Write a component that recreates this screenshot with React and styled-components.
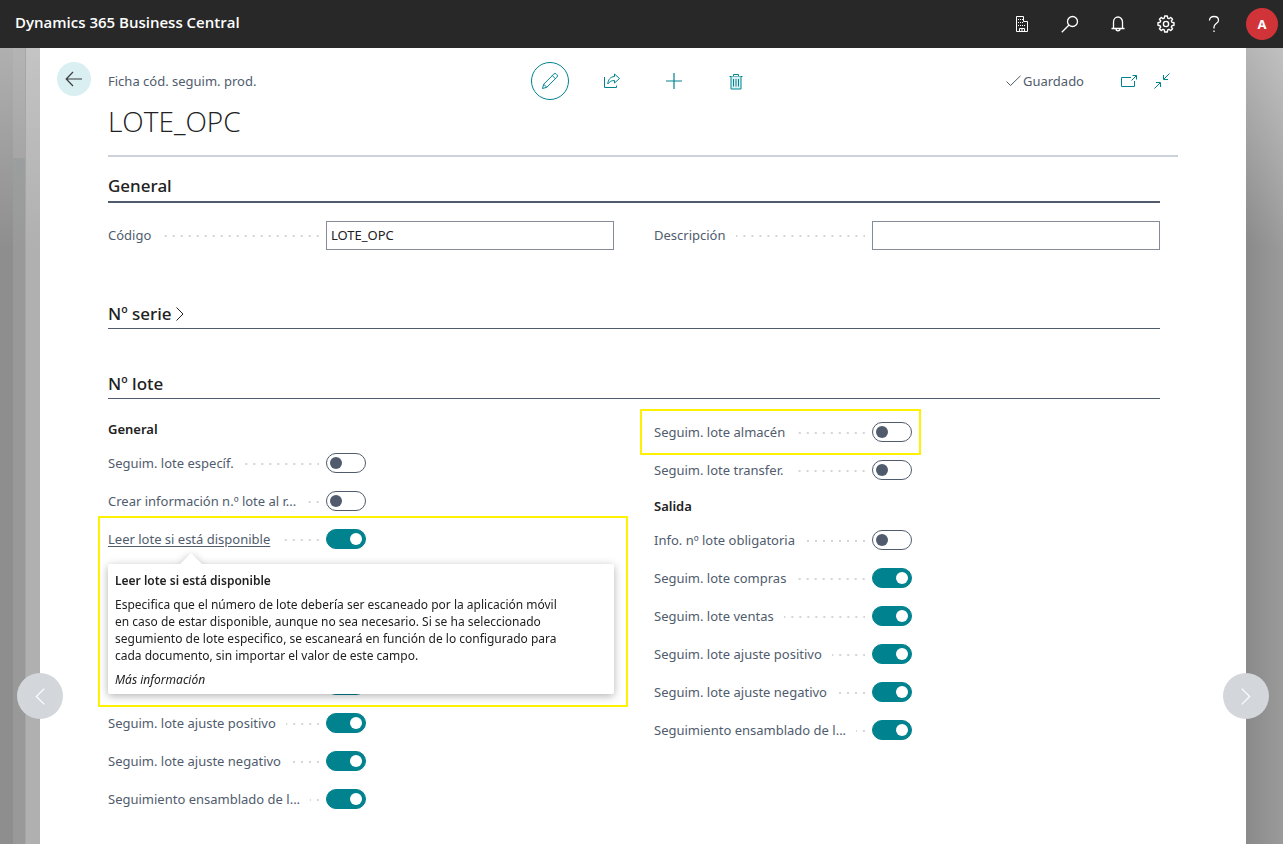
import styled, { createGlobalStyle } from "styled-components";

const GlobalStyle = createGlobalStyle`
  *, *::before, *::after {
    box-sizing: border-box;
  }

  body {
    margin: 0;
    background: #fff;
    color: #212121;
    font-family: "Noto Sans", "Open Sans", sans-serif;
    font-size: 13px;
    line-height: 18px;
  }

  button {
    font: inherit;
    border: 0;
    padding: 0;
    background: none;
    cursor: pointer;
  }

  h1, h2, h3, h4, p {
    margin: 0;
  }

  svg {
    display: block;
    fill: none;
    stroke: currentColor;
  }
`;

const Shell = styled.div`
  display: flex;
  flex-direction: column;
  height: 100vh;
  overflow: hidden;
`;

const TopBar = styled.header`
  display: flex;
  align-items: center;
  justify-content: space-between;
  flex: none;
  height: 48px;
  padding: 0 5px 0 15px;
  background: #282828;
  color: #fff;
`;

const Brand = styled.div`
  font-family: "Open Sans", sans-serif;
  font-size: 15px;
  font-weight: 600;
  padding-bottom: 4px;
`;

const TopActions = styled.nav`
  display: flex;
  align-items: center;
`;

const TopButton = styled.button`
  display: grid;
  place-items: center;
  width: 48px;
  height: 48px;
  color: #fff;
`;

const Avatar = styled.button`
  width: 32px;
  height: 32px;
  margin-left: 8px;
  border-radius: 50%;
  background: #d13438;
  color: #fff;
  font-size: 13px;
  font-weight: 700;
`;

const Stage = styled.div`
  position: relative;
  display: flex;
  flex: 1;
  min-height: 0;
`;

const LeftBackdrop = styled.div`
  display: grid;
  grid-template-columns: 13px 13px 1fr;
  flex: 0 0 40px;
`;

const Strip = styled.div`
  background: linear-gradient(170deg, ${(p) => p.$from}, ${(p) => p.$to} 200px);
`;

const SteppedStrip = styled.div`
  border-right: 1px solid #a6a6a6;
  background: linear-gradient(180deg, #b4b4b4, #a6a6a6 110px, #9c9f9f 110px, #999 200px);
`;

const RightBackdrop = styled.div`
  flex: 0 0 37px;
  background:
    linear-gradient(90deg, transparent, rgba(255, 255, 255, 0.14)),
    linear-gradient(190deg, #b6b6b6, #8a8a8a 200px);
`;

const Page = styled.main`
  flex: 1;
  min-width: 0;
  background: #fff;
`;

const PageHead = styled.div`
  display: flex;
  align-items: flex-start;
  gap: 17px;
  padding: 14px 68px 0 17px;
`;

const BackButton = styled.button`
  display: grid;
  place-items: center;
  flex: none;
  width: 34px;
  height: 34px;
  border-radius: 50%;
  background: #d9eff2;
  color: #3b3b3b;
`;

const HeadContent = styled.div`
  flex: 1;
  border-bottom: 2px solid #cdd2d8;
`;

const CommandBar = styled.div`
  display: grid;
  grid-template-columns: 1fr auto 1fr;
  align-items: center;
`;

const Crumb = styled.span`
  color: #505c6d;
`;

const Commands = styled.div`
  display: flex;
  gap: 24px;
`;

const Command = styled.button`
  display: grid;
  place-items: center;
  width: 38px;
  height: 38px;
  border-radius: 50%;
  border: 1px solid ${(p) => (p.$active ? "#00838f" : "transparent")};
  color: #00838f;
`;

const PageStatus = styled.div`
  display: flex;
  align-items: center;
  justify-content: flex-end;
  padding-right: 6px;
  color: #505c6d;
`;

const Saved = styled.span`
  display: flex;
  align-items: center;
  gap: 2px;
  margin-right: 35px;
`;

const StatusButton = styled.button`
  display: grid;
  place-items: center;
  width: 20px;
  height: 20px;
  color: #00838f;

  & + & {
    margin-left: 13px;
  }
`;

const Title = styled.h1`
  padding: 2px 0 15px;
  font-family: "Open Sans", sans-serif;
  font-size: 28px;
  font-weight: 300;
  line-height: 38px;
`;

const Body = styled.div`
  padding: 0 86px 0 68px;
`;

const SectionHead = styled.h2`
  display: flex;
  align-items: center;
  gap: 4px;
  height: ${(p) => (p.$strong ? 46 : 30)}px;
  padding-top: ${(p) => (p.$strong ? 14 : 0)}px;
  border-bottom: ${(p) => (p.$strong ? 2 : 1)}px solid #505c6d;
  font-size: 17px;
  font-weight: 500;
  line-height: 24px;
`;

const Columns = styled.div`
  display: grid;
  grid-template-columns: 1fr 1fr;
  column-gap: 40px;
`;

const GeneralFields = styled(Columns)`
  padding: 13px 0 45px;
`;

const LotFields = styled(Columns)`
  padding-top: 14px;
`;

const CollapsedSection = styled.section`
  padding-bottom: 40px;
`;

const GroupHead = styled.h3`
  height: 32px;
  padding-top: 8px;
  font-size: 13px;
  font-weight: 600;
  line-height: 18px;

  &:first-child {
    height: 31px;
    padding-top: 7px;
  }
`;

const Row = styled.div`
  position: relative;
  display: grid;
  grid-template-columns: 218fr 288fr;
  align-items: center;
  height: 38px;
`;

const Caption = styled.div`
  display: flex;
  align-items: center;
  min-width: 0;
  padding-right: 7px;
  color: #505c6d;

  label {
    flex: none;
    white-space: nowrap;
    text-decoration: ${(p) => (p.$underlined ? "underline" : "none")};
    text-underline-offset: 2px;
  }

  &::after {
    content: "";
    flex: 1;
    height: 2px;
    margin: 2px 0 0 10px;
    background: linear-gradient(90deg, transparent 6px, #d3d5d8 6px) right top / 8px 2px repeat-x;
  }
`;

const TextInput = styled.input`
  width: 100%;
  height: 29px;
  padding: 0 4px;
  border: 1px solid #848c98;
  border-radius: 0;
  background: #fff;
  color: #212121;
  font: inherit;
`;

const Switch = styled.input`
  appearance: none;
  display: flex;
  align-items: center;
  width: 40px;
  height: 20px;
  margin: 0;
  padding: 0 3px;
  border: 1px solid #505c6d;
  border-radius: 10px;
  background: #fff;
  cursor: pointer;

  &::before {
    content: "";
    width: 12px;
    height: 12px;
    border-radius: 50%;
    background: #505c6d;
  }

  &:checked {
    justify-content: flex-end;
    border-color: #00838f;
    background: #00838f;
  }

  &:checked::before {
    background: #fff;
  }
`;

/* Rows that stay behind the open tooltip */
const CoveredRows = styled.div`
  display: flex;
  flex-direction: column;
  justify-content: flex-end;
  height: 146px;

  ${Switch} {
    grid-column: 2;
  }
`;

const Marker = styled.div`
  position: absolute;
  z-index: 3;
  top: -4px;
  left: ${(p) => p.$left}px;
  width: ${(p) => p.$width}px;
  height: ${(p) => p.$height}px;
  border: 2px solid #fff200;
  pointer-events: none;
`;

const Tooltip = styled.div`
  position: absolute;
  z-index: 2;
  top: 44px;
  left: 0;
  width: 100%;
  padding: 8px 38px 6px 7px;
  border-radius: 2px;
  background: #fff;
  filter: drop-shadow(0 2px 4px rgba(0, 0, 0, 0.3));
  font-size: 12px;
  line-height: 17px;

  &::before {
    content: "";
    position: absolute;
    top: -11px;
    left: 72px;
    width: 22px;
    height: 11px;
    background: #fff;
    clip-path: polygon(50% 0, 100% 100%, 0 100%);
  }

  h4 {
    font-size: 12px;
    font-weight: 600;
  }

  p {
    max-width: 456px;
    margin: 7px 0;
  }

  a {
    color: inherit;
    font-style: italic;
    text-decoration: none;
  }
`;

const PagerButton = styled.button`
  position: absolute;
  z-index: 4;
  bottom: 125px;
  ${(p) => p.$side}: ${(p) => (p.$side === "left" ? 17 : 14)}px;
  display: grid;
  place-items: center;
  width: 46px;
  height: 46px;
  border-radius: 50%;
  background: #d3d6db;
  color: #fff;
`;

const BuildingIcon = () => (
  <svg width="14" height="18" viewBox="0 0 14 18">
    <path d="M1.500 16.500V1.500h7v5h4v10zM4.500 16.500v-3h5v3M7 13.500v3" />
    <path d="M3 4.500h5M3 7.500h5M3 10.500h8" strokeDasharray="1 1" />
  </svg>
);

const SearchIcon = () => (
  <svg width="18" height="18" viewBox="0 0 18 18" strokeWidth="1.3">
    <circle cx="11.500" cy="6.500" r="5" />
    <path d="M8 10L.8 17.200" />
  </svg>
);

const BellIcon = () => (
  <svg width="16" height="18" viewBox="0 0 16 18" strokeWidth="1.3">
    <path d="M1.500 13.500h13M3.500 13.500V7a4.500 5 0 0 1 9 0v6.500M6 14a2 1.800 0 0 0 4 0" />
  </svg>
);

const GearIcon = () => (
  <svg width="18" height="18" viewBox="0 0 18 18" strokeWidth="1.4" strokeLinejoin="round">
    <path d="M7.700 1h2.600l.4 2.100 1.300.6 1.800-1.300 1.800 1.800-1.300 1.800.6 1.300 2.100.4v2.600l-2.100.4-.6 1.300 1.300 1.800-1.800 1.800-1.800-1.300-1.300.6-.4 2.100H7.700l-.4-2.100-1.300-.6-1.800 1.300-1.800-1.800L3.700 12l-.6-1.300L1 10.300V7.700l2.100-.4L3.700 6 2.400 4.200l1.800-1.800L6 3.700l1.300-.6z" />
    <circle cx="9" cy="9" r="2.600" />
  </svg>
);

const HelpIcon = () => (
  <svg width="12" height="18" viewBox="0 0 12 18" strokeWidth="1.3">
    <path d="M1.500 5.500C1.500 2.700 3.300 1.500 6 1.500s4.500 1.500 4.500 3.700C10.500 8.500 6 8.700 6 12v1.500M6 15.500V17" />
  </svg>
);

const BackIcon = () => (
  <svg width="18" height="16" viewBox="0 0 18 16" strokeWidth="1.200">
    <path d="M17 8H1.500M8 1L1.200 8 8 15" />
  </svg>
);

const PencilIcon = () => (
  <svg width="18" height="18" viewBox="0 0 18 18" strokeLinejoin="round">
    <path d="M1.500 16.500l1.200-4.300L12.800 2.100a1.800 1.800 0 0 1 2.600 0l.5.5a1.800 1.800 0 0 1 0 2.600L5.800 15.300zM2.700 12.200l3.100 3.100M11.300 3.600l3.100 3.100" />
  </svg>
);

const ShareIcon = () => (
  <svg width="17" height="16" viewBox="0 0 17 16" strokeLinejoin="round">
    <path d="M.5 4v10.500h12V12.500" />
    <path d="M10.500 1l5 4.500-5 4.500V7.500C7.500 7.500 5.500 8.500 3.800 11 4 6.500 6.500 3.800 10.500 3.500z" />
  </svg>
);

const PlusIcon = () => (
  <svg width="16" height="16" viewBox="0 0 16 16" strokeWidth="1.200">
    <path d="M8 0v16M0 8h16" />
  </svg>
);

const TrashIcon = () => (
  <svg width="14" height="17" viewBox="0 0 14 17">
    <path d="M.5 3.500h13M4.500 3.500v-2h5v2" />
    <path d="M2 3.500v12.500h10V3.500" fill="#d9eff2" />
    <path d="M4.500 6v7.500M7 6v7.500M9.500 6v7.500" />
  </svg>
);

const CheckIcon = () => (
  <svg width="15" height="12" viewBox="0 0 15 12">
    <path d="M.5 6.500l4 4L14.500.8" />
  </svg>
);

const PopOutIcon = () => (
  <svg width="16" height="12" viewBox="0 0 16 12">
    <path d="M10 2.500H.5v9h13V6M10.500 5.500l5-5M11.500.5h4v4" />
  </svg>
);

const CollapseIcon = () => (
  <svg width="16" height="16" viewBox="0 0 16 16">
    <path d="M15.500.5L10 6M9.500 2v4.500H14M.5 15.500L6 10M2 9.500h4.500V14" />
  </svg>
);

const ChevronIcon = ({ width = 8, height = 14, left = false }) => (
  <svg width={width} height={height} viewBox="0 0 8 14" strokeWidth="1">
    <path d={left ? "M7.500.5L1 7l6.500 6.500" : "M.5.5L7 7 .5 13.500"} />
  </svg>
);

const SwitchRow = ({ id, label, checked, underlined, children }) => (
  <Row>
    <Caption $underlined={underlined}>
      <label htmlFor={id}>{label}</label>
    </Caption>
    <Switch id={id} type="checkbox" role="switch" defaultChecked={checked} />
    {children}
  </Row>
);

const inboundRows = [
  "Seguim. lote ajuste positivo",
  "Seguim. lote ajuste negativo",
  "Seguimiento ensamblado de l...",
];

const outboundRows = [
  { label: "Info. nº lote obligatoria", checked: false },
  { label: "Seguim. lote compras", checked: true },
  { label: "Seguim. lote ventas", checked: true },
  { label: "Seguim. lote ajuste positivo", checked: true },
  { label: "Seguim. lote ajuste negativo", checked: true },
  { label: "Seguimiento ensamblado de l...", checked: true },
];

const LotSection = () => (
  <section>
    <SectionHead>Nº lote</SectionHead>
    <LotFields>
      <div>
        <GroupHead>General</GroupHead>
        <SwitchRow id="lot-specific" label="Seguim. lote específ." />
        <SwitchRow id="lot-info" label="Crear información n.º lote al r..." />
        <SwitchRow id="lot-read" label="Leer lote si está disponible" checked underlined>
          <Tooltip role="tooltip">
            <h4>Leer lote si está disponible</h4>
            <p>
              Especifica que el número de lote debería ser escaneado por la
              aplicación móvil en caso de estar disponible, aunque no sea
              necesario. Si se ha seleccionado segumiento de lote especifico, se
              escaneará en función de lo configurado para cada documento, sin
              importar el valor de este campo.
            </p>
            <a href="#info">Más información</a>
          </Tooltip>
          <Marker $left={-10} $width={530} $height={191} />
        </SwitchRow>
        <CoveredRows>
          <Row>
            <Switch type="checkbox" role="switch" aria-label="Seguim. lote" defaultChecked />
          </Row>
        </CoveredRows>
        {inboundRows.map((label, i) => (
          <SwitchRow key={label} id={`in-${i}`} label={label} checked />
        ))}
      </div>
      <div>
        <SwitchRow id="lot-warehouse" label="Seguim. lote almacén">
          <Marker $left={-14} $width={281} $height={46} />
        </SwitchRow>
        <SwitchRow id="lot-transfer" label="Seguim. lote transfer." />
        <GroupHead>Salida</GroupHead>
        {outboundRows.map(({ label, checked }, i) => (
          <SwitchRow key={label} id={`out-${i}`} label={label} checked={checked} />
        ))}
      </div>
    </LotFields>
  </section>
);

const App = () => {
  return (
    <Shell>
      <GlobalStyle />
      <TopBar>
        <Brand>Dynamics 365 Business Central</Brand>
        <TopActions>
          <TopButton aria-label="Empresa"><BuildingIcon /></TopButton>
          <TopButton aria-label="Buscar"><SearchIcon /></TopButton>
          <TopButton aria-label="Notificaciones"><BellIcon /></TopButton>
          <TopButton aria-label="Configuración"><GearIcon /></TopButton>
          <TopButton aria-label="Ayuda"><HelpIcon /></TopButton>
          <Avatar>A</Avatar>
        </TopActions>
      </TopBar>
      <Stage>
        <LeftBackdrop>
          <Strip $from="#b0b0b0" $to="#8e8e8e" />
          <SteppedStrip />
          <Strip $from="#c4c4c4" $to="#b0b0b0" />
        </LeftBackdrop>
        <Page>
          <PageHead>
            <BackButton aria-label="Atrás"><BackIcon /></BackButton>
            <HeadContent>
              <CommandBar>
                <Crumb>Ficha cód. seguim. prod.</Crumb>
                <Commands>
                  <Command $active aria-label="Editar"><PencilIcon /></Command>
                  <Command aria-label="Compartir"><ShareIcon /></Command>
                  <Command aria-label="Nuevo"><PlusIcon /></Command>
                  <Command aria-label="Eliminar"><TrashIcon /></Command>
                </Commands>
                <PageStatus>
                  <Saved><CheckIcon />Guardado</Saved>
                  <StatusButton aria-label="Abrir en ventana nueva"><PopOutIcon /></StatusButton>
                  <StatusButton aria-label="Contraer"><CollapseIcon /></StatusButton>
                </PageStatus>
              </CommandBar>
              <Title>LOTE_OPC</Title>
            </HeadContent>
          </PageHead>
          <Body>
            <section>
              <SectionHead $strong>General</SectionHead>
              <GeneralFields>
                <Row>
                  <Caption><label htmlFor="code">Código</label></Caption>
                  <TextInput id="code" defaultValue="LOTE_OPC" />
                </Row>
                <Row>
                  <Caption><label htmlFor="description">Descripción</label></Caption>
                  <TextInput id="description" />
                </Row>
              </GeneralFields>
            </section>
            <CollapsedSection>
              <SectionHead>Nº serie<ChevronIcon /></SectionHead>
            </CollapsedSection>
            <LotSection />
          </Body>
        </Page>
        <RightBackdrop />
        <PagerButton $side="left" aria-label="Anterior"><ChevronIcon left width={10} height={17} /></PagerButton>
        <PagerButton $side="right" aria-label="Siguiente"><ChevronIcon width={10} height={17} /></PagerButton>
      </Stage>
    </Shell>
  );
};

export default App;
